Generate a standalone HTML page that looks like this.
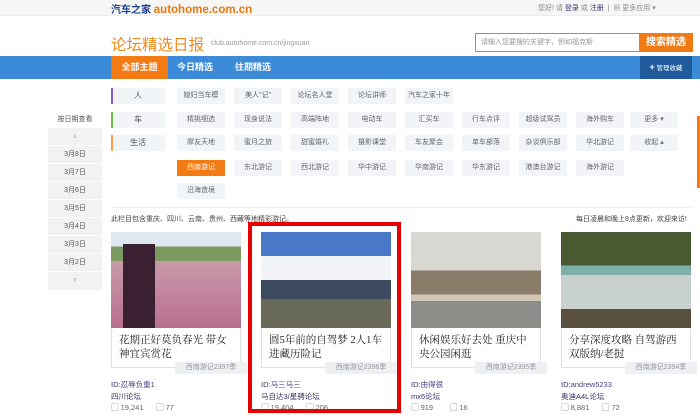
<!DOCTYPE html>
<html><head><meta charset="utf-8"><style>
*{margin:0;padding:0;box-sizing:border-box}
body{width:700px;height:415px;overflow:hidden;background:#fff;font-family:"Liberation Sans","Noto Sans CJK SC",sans-serif;font-size:8px;color:#555;position:relative}
.a{position:absolute}
.tag{position:absolute;width:48px;height:16px;background:#f2f4f7;color:#666;font-size:7px;text-align:center;line-height:16px}
.lab{position:absolute;left:111px;width:54px;height:16px;background:#f2f4f7;color:#555;font-size:8px;text-align:center;line-height:16px}
.bar{position:absolute;left:111px;width:2px;height:16px}
.side{position:absolute;left:48px;width:54px;height:18px;background:#f2f2f2;border-bottom:1px solid #fff;text-align:center;line-height:18px;font-size:7px;color:#555}
.card{position:absolute;top:232px;width:130px}
.img{height:96px;overflow:hidden}
.tt{height:40px;border:1px solid #e2e2e2;border-top:none;padding:6px 7px;font-family:"Liberation Serif","Noto Serif CJK SC",serif;font-size:10.5px;line-height:14px;color:#222}
.st{position:absolute;top:130px;right:-6px;width:72px;height:12px;background:#eef0f3;font-size:7px;color:#999;text-align:center;line-height:12px}
.m{font-size:7.5px;color:#336;line-height:11.5px;margin-top:11px}
.m span{color:#448}
</style></head><body>
<div class="a" style="left:0;top:0;width:700px;height:16px;background:#f6f6f6;border-bottom:1px solid #eee"></div>
<div class="a" style="left:111px;top:1px;font-size:10px;font-weight:bold;color:#1c3d8f;white-space:nowrap">汽车之家 <span style="color:#e8780c;font-size:11.5px">autohome.com.cn</span></div>
<div class="a" style="left:538px;top:3px;font-size:7px;color:#888">您好! 请 <span style="color:#336">登录</span> 或 <span style="color:#336">注册</span> &nbsp;|&nbsp; ▦ 更多应用 ▾</div>
<div class="a" style="left:111px;top:33px;font-size:15.5px;color:#f08a1a;white-space:nowrap">论坛精选日报</div>
<div class="a" style="left:211px;top:40px;font-size:7px;color:#999">club.autohome.com.cn/jingxuan</div>
<div class="a" style="left:475px;top:33px;width:165px;height:19px;border:1px solid #f07a14;font-size:7px;color:#999;line-height:17px;padding-left:5px">请输入您要搜的关键字，例如福克斯</div>
<div class="a" style="left:639px;top:33px;width:54px;height:19px;background:#f07a14;color:#fff;font-size:10px;font-weight:bold;text-align:center;line-height:19px">搜索精选</div>
<div class="a" style="left:0;top:56px;width:700px;height:23px;background:#3b8bd8"></div>
<div class="a" style="left:111px;top:56px;width:57px;height:23px;background:#f47a14;color:#fff;font-size:9px;font-weight:bold;text-align:center;line-height:23px">全部主题</div>
<div class="a" style="left:177px;top:56px;height:23px;color:#fff;font-size:9px;font-weight:bold;line-height:23px">今日精选</div>
<div class="a" style="left:235px;top:56px;height:23px;color:#fff;font-size:9px;font-weight:bold;line-height:23px">往期精选</div>
<div class="a" style="left:640px;top:56px;width:52px;height:23px;background:#1f5b9c;color:#fff;font-size:6.5px;text-align:center;line-height:23px"><b style="font-size:9px">+</b> 管理收藏</div>

<div class="lab" style="top:88px">人</div><div class="bar" style="top:88px;background:#7e57d6"></div>
<div class="lab" style="top:112px">车</div><div class="bar" style="top:112px;background:#6cbc4a"></div>
<div class="lab" style="top:135px">生活</div><div class="bar" style="top:135px;background:#f0a050"></div>

<div class="tag" style="left:177px;top:88px">媳妇当车模</div><div class="tag" style="left:234px;top:88px">美人"记"</div><div class="tag" style="left:291px;top:88px">论坛名人堂</div><div class="tag" style="left:348px;top:88px">论坛讲师</div><div class="tag" style="left:405px;top:88px">汽车之家十年</div>
<div class="tag" style="left:177px;top:112px">精挑细选</div><div class="tag" style="left:234px;top:112px">现身说法</div><div class="tag" style="left:291px;top:112px">高端阵地</div><div class="tag" style="left:348px;top:112px">电动车</div><div class="tag" style="left:405px;top:112px">汇买车</div><div class="tag" style="left:462px;top:112px">行车点评</div><div class="tag" style="left:519px;top:112px">超级试驾员</div><div class="tag" style="left:576px;top:112px">海外购车</div><div class="tag" style="left:630px;top:112px">更多 ▾</div>
<div class="tag" style="left:177px;top:135px">摩友天地</div><div class="tag" style="left:234px;top:135px">蜜月之旅</div><div class="tag" style="left:291px;top:135px">甜蜜婚礼</div><div class="tag" style="left:348px;top:135px">摄影课堂</div><div class="tag" style="left:405px;top:135px">车友聚会</div><div class="tag" style="left:462px;top:135px">单车部落</div><div class="tag" style="left:519px;top:135px">杂谈俱乐部</div><div class="tag" style="left:576px;top:135px">华北游记</div><div class="tag" style="left:630px;top:135px">收起 ▴</div>
<div class="tag" style="left:177px;top:160px;background:#f47a14;color:#fff">西南游记</div><div class="tag" style="left:234px;top:160px">东北游记</div><div class="tag" style="left:291px;top:160px">西北游记</div><div class="tag" style="left:348px;top:160px">华中游记</div><div class="tag" style="left:405px;top:160px">华南游记</div><div class="tag" style="left:462px;top:160px">华东游记</div><div class="tag" style="left:519px;top:160px">港澳台游记</div><div class="tag" style="left:576px;top:160px">海外游记</div>
<div class="tag" style="left:177px;top:183px">沿海造境</div>
<div class="a" style="left:697px;top:116px;width:3px;height:72px;background:#f47a14"></div>

<div class="a" style="left:111px;top:207px;width:580px;height:1px;background:#eee"></div>
<div class="a" style="left:111px;top:214px;font-size:7px;color:#444">此栏目包含重庆、四川、云南、贵州、西藏等地精彩游记。</div>
<div class="a" style="left:576px;top:214px;font-size:7px;color:#444">每日凌晨和晚上8点更新，欢迎来访!</div>

<div class="a" style="left:48px;top:114px;width:54px;text-align:center;font-size:7px;color:#555">按日期查看</div>
<div class="side" style="top:128px;color:#ccc">▲</div>
<div class="side" style="top:146px">3月8日</div><div class="side" style="top:164px">3月7日</div><div class="side" style="top:182px">3月6日</div><div class="side" style="top:200px">3月5日</div><div class="side" style="top:218px">3月4日</div><div class="side" style="top:236px">3月3日</div><div class="side" style="top:254px">3月2日</div>
<div class="side" style="top:272px;height:19px;color:#ccc">▼</div>

<div class="a" style="left:248px;top:222px;width:153px;height:191px;border:4px solid #e60000"></div>

<div class="card" style="left:111px"><div class="img" style="background:linear-gradient(#dfe8f0 0 15%,#7a9a60 15% 30%,#c89aa8 30%,#b86f90 100%);padding:12px 0 0 12px"><div style="width:32px;height:84px;background:#3a2030"></div></div>
<div class="tt">花期正好莫负春光 带女神宜宾赏花</div><div class="st">西南游记2397季</div>
<div class="m">ID:<span>忍辱负重1</span><br>四川论坛<br><span style="color:#666">▢ 19,241 &nbsp;&nbsp;&nbsp;&nbsp; ▢ 77</span></div></div>

<div class="card" style="left:261px"><div class="img" style="background:linear-gradient(#4a78c8 0 25%,#f2f4f7 25% 50%,#3c4a60 50% 70%,#6a6a58 70%)"></div>
<div class="tt">圆5年前的自驾梦 2人1车进藏历险记</div><div class="st">西南游记2396季</div>
<div class="m">ID:<span>马三马三</span><br>马自达3/星骋论坛<br><span style="color:#666">▢ 19,404 &nbsp;&nbsp;&nbsp;&nbsp; ▢ 206</span></div></div>

<div class="card" style="left:411px"><div class="img" style="background:linear-gradient(#d8d8d2 0 40%,#8a7c68 40% 65%,#d0c8b4 65% 72%,#8c8c88 72%)"></div>
<div class="tt">休闲娱乐好去处 重庆中央公园闲逛</div><div class="st">西南游记2395季</div>
<div class="m">ID:<span>由得很</span><br>mx6论坛<br><span style="color:#666">▢ 919 &nbsp;&nbsp;&nbsp;&nbsp;&nbsp;&nbsp; ▢ 16</span></div></div>

<div class="card" style="left:561px"><div class="img" style="background:linear-gradient(#4a5a30 0 35%,#7cb0a8 35% 45%,#c8d0d0 45% 80%,#5a5040 80%)"></div>
<div class="tt">分享深度攻略 自驾游西双版纳/老挝</div><div class="st">西南游记2394季</div>
<div class="m">ID:<span>andrew5233</span><br>奥迪A4L论坛<br><span style="color:#666">▢ 8,881 &nbsp;&nbsp;&nbsp;&nbsp; ▢ 72</span></div></div>
</body></html>
